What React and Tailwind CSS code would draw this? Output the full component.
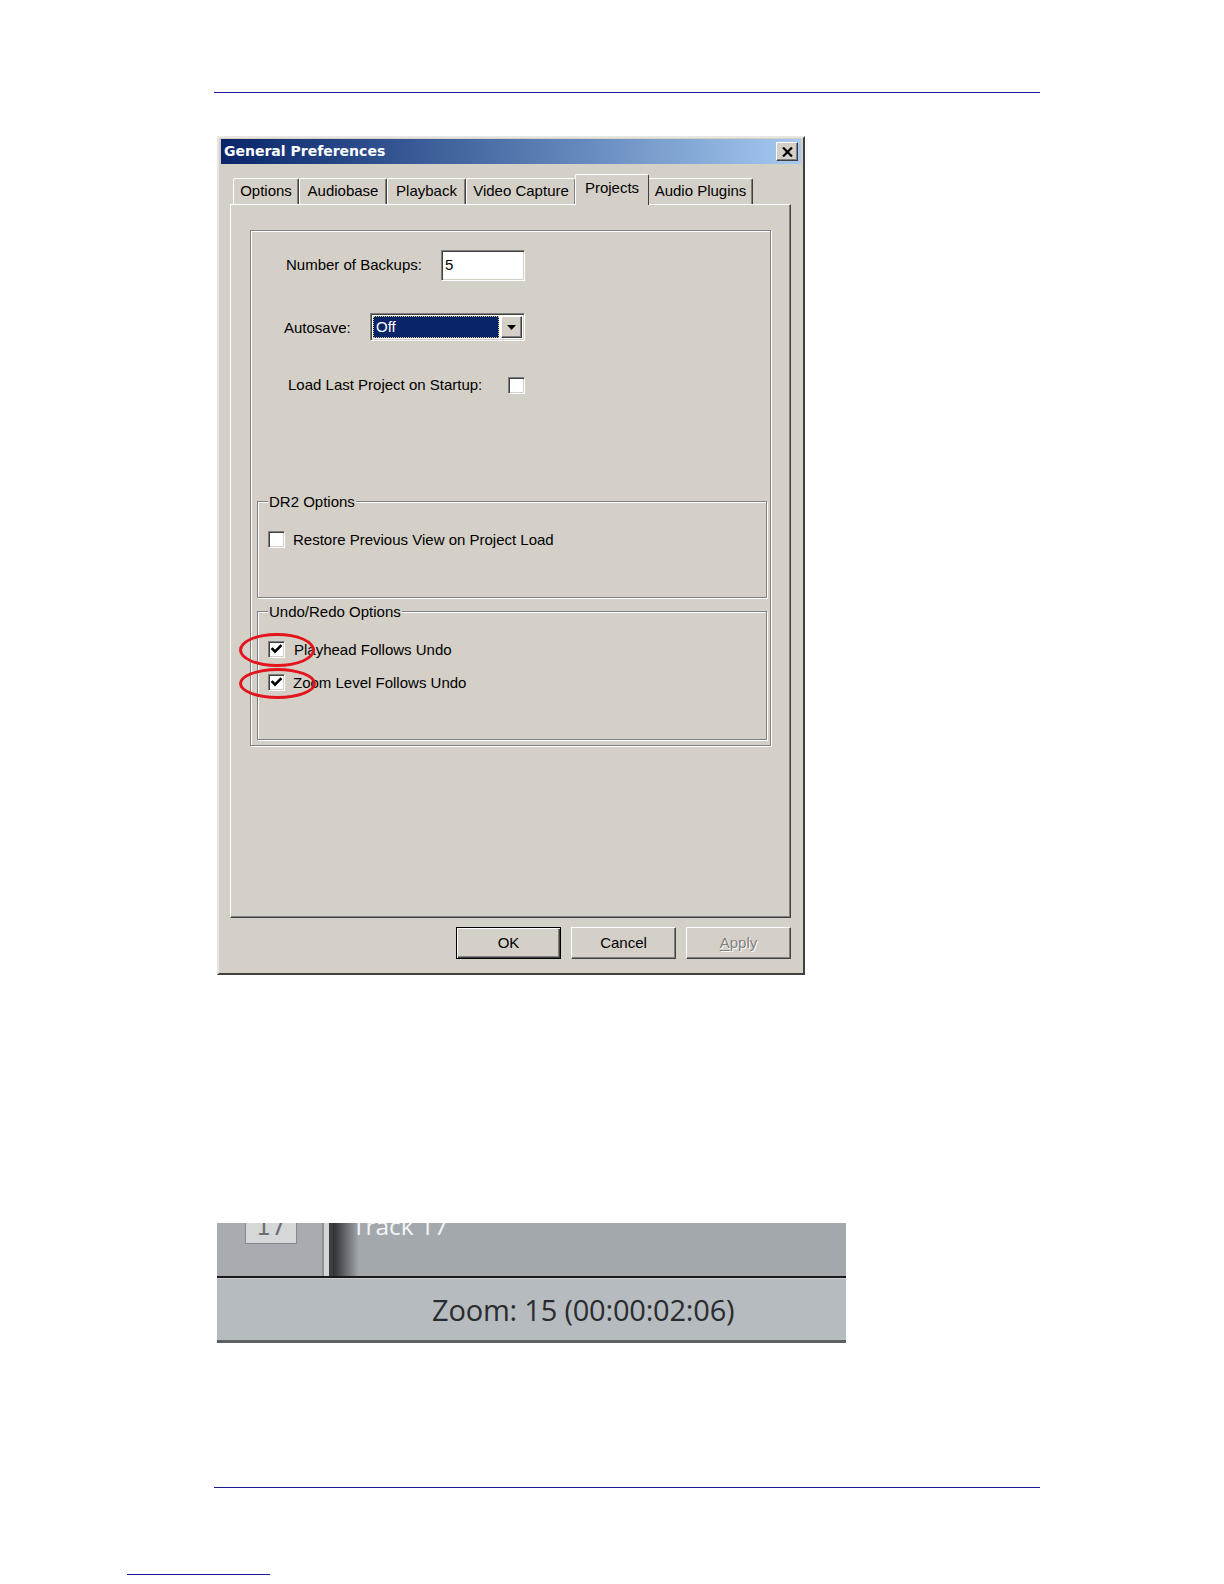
import React from 'react'

const raised =
  'border border-t-white border-l-white border-r-[#404040] border-b-[#404040] shadow-[inset_-1px_-1px_0_#808080]'
const sunken =
  'border border-t-[#808080] border-l-[#808080] border-r-white border-b-white shadow-[inset_1px_1px_0_#404040,inset_-1px_-1px_0_#d4d0c8]'
const etched = 'border border-[#808080] shadow-[inset_1px_1px_0_#ffffff,1px_1px_0_#ffffff]'

const CheckBox = ({ checked }) => (
  <span className={`w-[17px] h-[17px] shrink-0 bg-white flex items-center justify-center ${sunken}`}>
    {checked && (
      <svg width="13" height="13" viewBox="0 0 13 13">
        <polyline points="2.5,6 5,8.6 10.5,3" fill="none" stroke="#000" strokeWidth="2.6" strokeLinecap="square" />
      </svg>
    )}
  </span>
)

const tabs = [
  { label: 'Options', w: 'w-[66px]' },
  { label: 'Audiobase', w: 'w-[88px]' },
  { label: 'Playback', w: 'w-[79px]' },
  { label: 'Video Capture', w: 'w-[110px]' },
  { label: 'Projects', w: 'w-[74px]', active: true },
  { label: 'Audio Plugins', w: 'w-[105px]' },
]

const Group = ({ label, className, children }) => (
  <fieldset className={`${etched} px-[10px] ${className}`}>
    <legend className="bg-[#d4d0c8] px-px text-[15px] leading-[17px]">{label}</legend>
    {children}
  </fieldset>
)

const Dialog = () => (
  <div
    className="ml-[217px] mt-[43px] w-[588px] h-[839px] bg-[#d4d0c8] flex flex-col px-[2px] pt-px border-2 border-t-[#e8e6e0] border-l-[#e8e6e0] border-r-[#404040] border-b-[#404040] text-black"
    style={{ fontFamily: '"Liberation Sans", Arial, sans-serif' }}
  >
    {/* Title bar */}
    <div className="h-[25px] flex items-center justify-between bg-gradient-to-r from-[#0a246a] to-[#a6caf0] pl-[3px] pr-[3px]">
      <span className="text-white text-[14px] font-bold" style={{ fontFamily: '"DejaVu Sans", Verdana, sans-serif' }}>
        General Preferences
      </span>
      <span className={`w-[22px] h-[19px] bg-[#d4d0c8] flex items-center justify-center ${raised}`}>
        <svg width="11" height="10" viewBox="0 0 11 10">
          <path d="M1 0.5 L10 9.5 M10 0.5 L1 9.5" stroke="#000" strokeWidth="2.2" />
        </svg>
      </span>
    </div>

    {/* Tabs */}
    <div className="mt-[11px] h-[29px] ml-[12px] flex items-end">
      {tabs.map((t) =>
        t.active ? (
          <div
            key={t.label}
            className={`${t.w} h-[31px] -mb-[1px] -mx-[1px] relative z-10 bg-[#d4d0c8] border border-b-0 border-t-white border-l-white border-r-[#404040] rounded-t-[2px] flex items-start justify-center pt-[2px] text-[15px]`}
          >
            {t.label}
          </div>
        ) : (
          <div
            key={t.label}
            className={`${t.w} h-[26px] bg-[#d4d0c8] border border-b-0 border-t-white border-l-white border-r-[#404040] rounded-t-[2px] shadow-[inset_-1px_0_0_#808080] flex items-center justify-center text-[15px]`}
          >
            {t.label}
          </div>
        )
      )}
    </div>

    {/* Panel */}
    <div className={`ml-[9px] w-[561px] h-[714px] ${raised}`}>
      <div className={`mt-[25px] ml-[19px] w-[521px] h-[516px] flex flex-col ${etched} text-[15px]`}>
        <div className="mt-[19px] h-[31px] flex items-center">
          <span className="w-[190px] pl-[35px]">Number of Backups:</span>
          <span className={`w-[84px] h-[31px] bg-white flex items-center pl-[3px] ${sunken}`}>5</span>
        </div>

        <div className="mt-[32px] h-[28px] flex items-center">
          <span className="w-[119px] pl-[33px] pt-[3px]">Autosave:</span>
          <span className={`w-[155px] h-[28px] bg-white flex items-stretch p-[2px] ${sunken}`}>
            <span className="flex-1 bg-[#0a246a] outline-1 outline-dotted outline-[#c8c070] -outline-offset-1 text-white flex items-center pl-[3px] mr-[2px]">
              Off
            </span>
            <span className={`w-[21px] bg-[#d4d0c8] flex items-center justify-center ${raised}`}>
              <svg width="9" height="5" viewBox="0 0 9 5">
                <path d="M0 0 H9 L4.5 5 Z" fill="#000" />
              </svg>
            </span>
          </span>
        </div>

        <div className="mt-[36px] h-[17px] flex items-center">
          <span className="w-[257px] pl-[37px]">Load Last Project on Startup:</span>
          <CheckBox />
        </div>

        <Group label="DR2 Options" className="mt-[99px] ml-[6px] w-[510px] h-[105px]">
          <div className="mt-[21px] h-[17px] leading-[17px] flex items-center gap-[8px]">
            <CheckBox />
            <span>Restore Previous View on Project Load</span>
          </div>
        </Group>

        <Group label="Undo/Redo Options" className="mt-[5px] ml-[6px] w-[510px] h-[137px]">
          <div className="mt-[21px] h-[17px] leading-[17px] flex items-center gap-[9px]">
            <CheckBox checked />
            <span>Playhead Follows Undo</span>
          </div>
          <div className="mt-[16px] h-[17px] leading-[17px] flex items-center gap-[8px]">
            <CheckBox checked />
            <span>Zoom Level Follows Undo</span>
          </div>
        </Group>
      </div>
    </div>

    {/* Buttons */}
    <div className="mt-[9px] flex justify-end gap-[10px] mr-[10px] text-[15px]">
      <button className="w-[105px] h-[32px] bg-[#d4d0c8] border border-black shadow-[inset_1px_1px_0_#ffffff,inset_-1px_-1px_0_#404040,inset_-2px_-2px_0_#808080]">
        OK
      </button>
      <button className={`w-[105px] h-[32px] bg-[#d4d0c8] ${raised}`}>Cancel</button>
      <button className={`w-[105px] h-[32px] bg-[#d4d0c8] text-[#808080] [text-shadow:1px_1px_0_#ffffff] ${raised}`}>
        <span className="underline underline-offset-2">A</span>pply
      </button>
    </div>
  </div>
)

const TrackStrip = () => (
  <div className="ml-[217px] mt-[248px] w-[629px] h-[120px] flex flex-col" style={{ fontFamily: '"Open Sans", "Noto Sans", sans-serif' }}>
    <div className="h-[53px] flex overflow-hidden bg-[#a3a8ad]">
      <div className="w-[105px] bg-[#a8acb0]">
        <div className="ml-[28px] w-[52px] h-[21px] bg-[#d6d7d8] border-r border-b border-l border-[#85898d] overflow-hidden flex justify-center">
          <span className="-mt-[7px] text-[23px] leading-[23px] text-[#6a6e72]" style={{ fontFamily: '"DejaVu Sans", sans-serif' }}>
            17
          </span>
        </div>
      </div>
      <div className="w-[11px] flex">
        <div className="w-[2px] bg-[#8c9094]" />
        <div className="w-[5px] bg-[#d2d5d8]" />
        <div className="w-[4px] bg-[#3c3f42]" />
      </div>
      <div className="flex-1 flex bg-gradient-to-r from-[#2e3033] from-0% via-[#a3a8ad] via-[5%] to-[#a3a8ad] pl-[19px] overflow-hidden">
        <span className="-mt-[9px] text-[24.5px] leading-[24.5px] text-[#f4f5f6]">Track 17</span>
      </div>
    </div>
    <div className="h-[2px] bg-[#1a1a1a]" />
    <div className="h-[62px] bg-[#b6bbc0] border-t border-[#c9cdd1] flex items-center pl-[215px]">
      <span className="text-[29px] text-[#2a2c2e] tracking-[-0.2px]">Zoom: 15 (00:00:02:06)</span>
    </div>
    <div className="h-[3px] bg-[#5c6064]" />
  </div>
)

const App = () => (
  <div className="relative w-[1224px] h-[1584px] bg-white flex flex-col overflow-hidden">
    <div className="mt-[92px] ml-[214px] w-[826px] h-px bg-[#1b1b9c]" />
    <Dialog />
    <TrackStrip />
    <div className="mt-[144px] ml-[214px] w-[826px] h-px bg-[#1b1b9c]" />
    <div className="mt-[86px] ml-[127px] w-[143px] h-px bg-[#1b1b9c]" />

    {/* red annotation rings */}
    <div className="absolute left-[239px] top-[633px] w-[76px] h-[34px] rounded-[50%] border-[3px] border-[#e3141b]" />
    <div className="absolute left-[239px] top-[668px] w-[77px] h-[31px] rounded-[50%] border-[3px] border-[#e3141b]" />
  </div>
)

export default App
